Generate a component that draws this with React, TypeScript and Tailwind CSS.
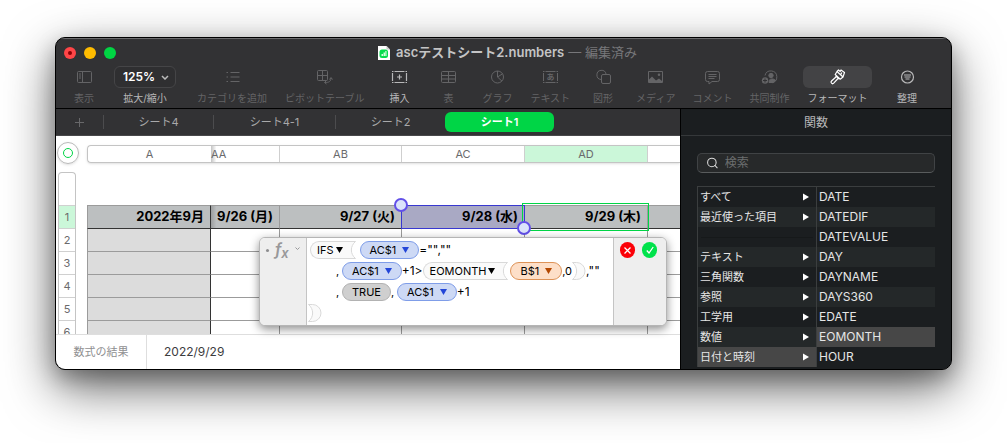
import { ReactNode } from 'react';
import { Search } from 'lucide-react';

const FONT = "font-[Inter,'Noto_Sans_CJK_JP',sans-serif]";

const line = { fill: 'none', stroke: 'currentColor', strokeWidth: 1 };

const icons: Record<string, ReactNode> = {
  view: (
    <g {...line}>
      <rect x="1.5" y="4.5" width="14" height="11" rx="1" />
      <path d="M6.5 4.5v11M3 7h2M3 9h2M3 11h2" />
    </g>
  ),
  category: (
    <path {...line} strokeWidth={1.2} d="M2.5 5.5h1.5M6.5 5.5h9M2.5 10h1.5M6.5 10h9M2.5 14.5h1.5M6.5 14.5h9" />
  ),
  pivot: (
    <g {...line}>
      <rect x="1.5" y="3.5" width="10" height="10" rx="1" />
      <path d="M6.5 3.5v10M1.5 8.5h10M9 15.500c4 0 6-1 6-4.500M13.500 12.500l1.500-2 1.500 2M10.500 13.500l-2 2 2 1.500" />
    </g>
  ),
  insert: (
    <g {...line} strokeWidth={1.2}>
      <path d="M1.5 6v8M15.5 6v8M3.5 4.5h10M3.5 15.5h10M8.5 7.500v5M6 10h5" />
      <path d="M1 4.5h1.5M14.5 4.5H16M1 15.5h1.5M14.5 15.5H16" />
    </g>
  ),
  table: (
    <g {...line}>
      <rect x="1.5" y="4.5" width="14" height="11" rx="1" />
      <path d="M1.5 8.5h14M1.5 12h14M8.5 4.5v11" />
    </g>
  ),
  chart: (
    <g {...line}>
      <circle cx="8.5" cy="10" r="6" />
      <path d="M8.5 4v6l4.500 4.200M8.5 10l5-3.200" />
    </g>
  ),
  text: (
    <g {...line}>
      <path d="M1.5 6v8M15.5 6v8M3.5 4.5h10M3.5 15.5h10" />
      <path d="M1 4.5h1.5M14.5 4.5H16M1 15.5h1.5M14.5 15.5H16" />
      <text x="8.5" y="13" fontSize="8" fontWeight="700" textAnchor="middle" fill="currentColor" stroke="none">あ</text>
    </g>
  ),
  shape: (
    <g {...line}>
      <path d="M6.5 12.5H6A4.600 4.600 0 1 1 11 7" />
      <rect x="6.5" y="7.5" width="9" height="9" rx="1.500" />
    </g>
  ),
  media: (
    <path
      fill="currentColor"
      fillRule="evenodd"
      d="M2 4h13a1 1 0 0 1 1 1v10a1 1 0 0 1-1 1H2a1 1 0 0 1-1-1V5a1 1 0 0 1 1-1Zm0 1v7.500l3-3 4 4 3-2 3 2.500V5H2Zm10 1.500a1.300 1.300 0 1 1 0 2.600 1.300 1.300 0 0 1 0-2.600Z"
    />
  ),
  comment: (
    <path {...line} d="M3.5 4.5h10a2 2 0 0 1 2 2v6a2 2 0 0 1-2 2H8l-3 2.500v-2.500H3.500a2 2 0 0 1-2-2v-6a2 2 0 0 1 2-2ZM4.500 7.500h8M4.500 9.500h8M4.500 11.500h6" />
  ),
  share: (
    <g {...line}>
      <path d="M4 8.500a6 6 0 1 1 7 7.300" />
      <circle cx="10" cy="8.500" r="2.200" fill="currentColor" />
      <path fill="currentColor" d="M8 15.500c0-3 1-3.500 3-3.500s3 .5 3.500 1.500L12 15.500Z" />
      <circle cx="4" cy="13.500" r="3.200" fill="currentColor" stroke="none" />
      <path stroke="#323234" d="M4 11.500v4M2 13.500h4" />
    </g>
  ),
  format: (
    <g {...line} strokeWidth={1.2} strokeLinejoin="round">
      <path d="M8 4.500 14 10l1.500-4.500L12 3l-.8 1.500L9.500 3 8 4.500ZM8 4.500 6.200 7.500l5 4.700L14 10M7.200 9.800 2.500 14a1.500 1.500 0 0 0 2.200 2.200L9 11.500M12.800 5.500l-1 2M6.500 8.500l3.500 3.500" />
    </g>
  ),
  organize: (
    <g {...line} strokeWidth={1.2}>
      <circle cx="8.5" cy="10" r="6" />
      <path d="M5 8h7M5.500 10h6M6.500 12h4" />
    </g>
  ),
};

function ToolButton({ icon, label, active = false }: { icon: string; label: string; active?: boolean }) {
  return (
    <button
      className={`flex min-w-8 flex-col items-center text-[10px] leading-4 whitespace-nowrap ${
        active ? 'text-[#b8b8b9]' : 'text-[#646466]'
      }`}
    >
      <span className={`flex h-[22px] items-center justify-center ${icon === 'format' ? 'w-[69px] rounded-md bg-[#434345] text-white' : ''}`}>
        <svg width="17" height="20" viewBox="0 0 17 20">{icons[icon]}</svg>
      </span>
      <span className="mt-0.5">{label}</span>
    </button>
  );
}

const editTools = [
  ['insert', '挿入'],
  ['table', '表'],
  ['chart', 'グラフ'],
  ['text', 'テキスト'],
  ['shape', '図形'],
  ['media', 'メディア'],
  ['comment', 'コメント'],
  ['share', '共同制作'],
];

function TitleBar() {
  return (
    <div className="relative flex h-[27px] items-center justify-center text-[13px]">
      <div className="absolute left-2 flex gap-2">
        <button aria-label="閉じる" className="flex size-3 items-center justify-center rounded-full bg-[#ff4547]">
          <span className="size-1 rounded-full bg-[#8c0004]" />
        </button>
        <button aria-label="しまう" className="size-3 rounded-full bg-[#ffbc00]" />
        <button aria-label="拡大" className="size-3 rounded-full bg-[#00d543]" />
      </div>
      <svg width="12" height="14" viewBox="0 0 12 14" className="mr-1.5 ml-2">
        <path fill="#fff" d="M0 0h8.500L12 3.500V14H0Z" />
        <path fill="#c9c9c9" d="M8.500 0v3.500H12Z" />
        <rect x="1.500" y="3.500" width="8.500" height="8.500" rx="2.500" fill="#06dc4c" />
        <path fill="#d6ffe0" d="M3.500 8h1.500v2H3.500ZM5.500 6.500H7V10H5.500ZM7.300 5h1.200v5H7.300Z" />
      </svg>
      <h1 className="font-semibold text-[#c4c4c5]">ascテストシート2.numbers</h1>
      <span className="ml-1 text-[#77777a]">— 編集済み</span>
    </div>
  );
}

function Toolbar() {
  return (
    <div className="flex items-start border-b border-black pr-7 pb-0.5 pl-3">
      <div className="flex gap-3.5">
        <ToolButton icon="view" label="表示" />
        <label className="flex flex-col items-center text-[10px] leading-4 text-[#b8b8b9]">
          <span className="relative flex h-[22px] w-[62px] items-center">
            <select className="size-full appearance-none rounded-md border border-[#454547] bg-[#2f2f31] pl-2 text-xs font-semibold text-white">
              <option>125%</option>
            </select>
            <svg width="8" height="5" viewBox="0 0 8 5" className="pointer-events-none absolute right-[7px]">
              <path d="m1 1 3 3 3-3" fill="none" stroke="#bbb" strokeWidth="1.500" />
            </svg>
          </span>
          <span className="mt-0.5">拡大/縮小</span>
        </label>
      </div>
      <div className="ml-[21px] flex gap-[18px]">
        <ToolButton icon="category" label="カテゴリを追加" />
        <ToolButton icon="pivot" label="ピボットテーブル" />
      </div>
      <div className="ml-[19px] flex gap-[17px]">
        {editTools.map(([icon, label]) => (
          <ToolButton key={icon} icon={icon} label={label} active={icon === 'insert'} />
        ))}
      </div>
      <div className="ml-auto flex gap-[19px]">
        <ToolButton icon="format" label="フォーマット" active />
        <ToolButton icon="organize" label="整理" active />
      </div>
    </div>
  );
}

function SheetTabs() {
  return (
    <nav className="flex h-[27px] items-center border-b border-[#48484a] bg-[#323234] text-[11px] text-[#a9a9aa]">
      <button aria-label="シートを追加" className="flex w-[47px] justify-center text-[#68686a]">
        <svg width="11" height="11" viewBox="0 0 11 11">
          <path d="M5.500 1v9M1 5.500h9" stroke="currentColor" />
        </svg>
      </button>
      <button className="h-3.5 w-[110px] border-l border-[#4c4c4e] leading-3.5">シート4</button>
      <button className="h-3.5 w-[122px] border-l border-[#4c4c4e] leading-3.5">シート4-1</button>
      <button className="h-3.5 w-[110px] border-l border-[#4c4c4e] leading-3.5">シート2</button>
      <button className="h-5 w-[109px] rounded-md bg-[#00d546] font-semibold text-white">シート1</button>
    </nav>
  );
}

const dates = ['9/26 (月)', '9/27 (火)', '9/28 (水)', '9/29 (木)'];
const columns = ['A', 'AA', 'AB', 'AC', 'AD', ''];
const columnGrid = 'grid-cols-[123px_68px_122px_123px_123px_1fr]';

function RowHeader() {
  return (
    <div className="flex w-[31px] shrink-0 flex-col pl-0.5">
      <button aria-label="表を選択" className="mt-1.5 -ml-px flex size-[22px] shrink-0 items-center justify-center rounded-full border border-[#b9b9b9] shadow-sm">
        <span className="size-2.5 rounded-full border border-[#00d546]" />
      </button>
      <div className="mt-2 w-[18px] rounded-t-[4px] border border-b-0 border-[#c4c4c4] text-center text-[11px] text-[#6a6a6c]">
        <div className="h-8" />
        {[1, 2, 3, 4, 5, 6].map((n) => (
          <div key={n} className={`h-[23px] border-t border-[#d0d0d0] leading-[23px] ${n === 1 ? 'bg-[#cbf7d9]' : ''}`}>
            {n}
          </div>
        ))}
      </div>
    </div>
  );
}

function Grid() {
  return (
    <div className="min-w-0 flex-1">
      <div className={`mt-[9px] grid ${columnGrid} h-[18px] overflow-hidden rounded-l-[4px] border border-r-0 border-[#c4c4c4] text-center text-[11px] leading-4 text-[#6a6a6c] shadow-sm`}>
        {columns.map((c, i) => (
          <div
            key={i}
            className={`${i > 1 ? 'border-l border-[#cfcfcf]' : ''} ${c === 'AA' ? 'bg-linear-to-r from-[#c4c4c4] to-white to-8% text-left' : ''} ${c === 'AD' ? 'bg-[#cbf7d9]' : ''}`}
          >
            {c}
          </div>
        ))}
      </div>
      <div className="relative mt-[42px]">
        <table className="w-full table-fixed border-separate border-spacing-0 text-[13px]">
          <colgroup>
            <col className="w-[124px]" />
            <col className="w-[69px]" />
            <col className="w-[122px]" />
            <col className="w-[123px]" />
            <col className="w-[123px]" />
            <col />
          </colgroup>
          <thead>
            <tr className="h-6 bg-[#bcbfc0] text-right text-black">
              <th className="border border-[#9b9b9b] border-r-[#333] border-b-[#333] pr-1.5 text-right font-bold">2022年9月</th>
              {dates.map((d, i) => (
                <th
                  key={d}
                  className={`border-t border-r border-b border-[#9b9b9b] border-b-[#333] pr-1.5 text-right font-bold whitespace-nowrap ${
                    i === 0 ? 'bg-linear-to-r from-[#9c9e9f] to-[#bcbfc0] to-8%' : ''
                  } ${i === 2 ? 'bg-[#a9a9c4]' : ''}`}
                >
                  {d}
                </th>
              ))}
              <th className="border-t border-b border-[#9b9b9b] border-b-[#333]" />
            </tr>
          </thead>
          <tbody>
            {[2, 3, 4, 5, 6].map((n) => (
              <tr key={n} className="h-[23px]">
                <td className="border-r border-b border-l border-[#9b9b9b] border-r-[#333] bg-[#dcdcdc]" />
                {dates.map((d) => (
                  <td key={d} className="border-r border-b border-[#9b9b9b]" />
                ))}
                <td className="border-b border-[#9b9b9b]" />
              </tr>
            ))}
          </tbody>
        </table>
        <div className="absolute top-0 left-[314px] h-6 w-[124px] border border-[#3838d0]">
          <span className="absolute -top-2 -left-2 size-[14px] rounded-full border-2 border-[#6250e8] bg-[#dbe3fb]" />
        </div>
        <div className="absolute -top-0.5 left-[435px] h-7 w-[127px] border border-[#00d546]" />
        <span className="absolute top-4 left-[430px] size-[14px] rounded-full border-2 border-[#6250e8] bg-[#dbe3fb]" />
      </div>
    </div>
  );
}

const Down = ({ className = 'text-black' }: { className?: string }) => (
  <svg width="7" height="6" viewBox="0 0 7 6" className={className}>
    <path d="M0 0h7L3.500 6Z" fill="currentColor" />
  </svg>
);

function Cell({ name, orange = false }: { name: string; orange?: boolean }) {
  return (
    <button
      className={`flex h-[18px] items-center gap-1.5 rounded-full border px-[9px] ${
        orange ? 'border-[#dd9358] bg-[#fddfc8]' : 'border-[#7f9de8] bg-[#cdd9f5]'
      }`}
    >
      {name}
      <Down className={orange ? 'text-[#b34700]' : 'text-[#2346d8]'} />
    </button>
  );
}

function Func({ name }: { name: string }) {
  return (
    <button className="flex h-[18px] items-center">
      <span className="flex h-[18px] items-center gap-0.5 rounded-l-full border border-r-0 border-[#d9d9d9] bg-[#fafafa] pl-1.5">
        {name}
        <Down />
      </span>
      <svg width="13" height="18" viewBox="0 0 13 18">
        <path d="M0 .5h12.500C7 5 7 13 12.500 17.500H0" fill="#fafafa" stroke="#d9d9d9" />
      </svg>
    </button>
  );
}

const Close = () => (
  <svg width="14" height="18" viewBox="0 0 14 18">
    <path d="M.5.500h4a8.500 8.500 0 0 1 0 17h-4C6 13 6 5 .5.500Z" fill="#fafafa" stroke="#d9d9d9" />
  </svg>
);

function FormulaEditor() {
  return (
    <div className="absolute top-[101px] left-[203px] flex h-[89px] w-[408px] overflow-hidden rounded-md border border-[#b5b5b5] bg-white text-[11px] text-black shadow-[0_3px_10px_rgba(0,0,0,0.45)]">
      <div className="flex w-[47px] shrink-0 items-start gap-1.5 border-r border-[#c4c4c4] bg-[#eeeeee] pt-[3px] pl-1.5 text-[#98989a]">
        <span className="mt-2 size-[3px] rounded-full bg-[#8d8d8f]" />
        <span className="text-base leading-4 font-semibold italic">
          f<sub className="text-[13px]">x</sub>
        </span>
        <svg width="5" height="4" viewBox="0 0 5 4" className="mt-1.5">
          <path d="m.5.500 2 2 2-2" fill="none" stroke="currentColor" />
        </svg>
      </div>
      <div className="flex flex-1 flex-col gap-[3px] pt-[3px] pl-[3px] leading-4">
        <div className="flex items-center">
          <Func name="IFS" />
          <span className="w-1" />
          <Cell name="AC$1" />
          <span className="text-xs">="",""</span>
        </div>
        <div className="flex items-center pl-[26px]">
          <span className="w-1.5">,</span>
          <Cell name="AC$1" />
          <span className="text-xs">+1&gt;</span>
          <Func name="EOMONTH" />
          <span className="w-0.5" />
          <Cell name="B$1" orange />
          <span>,0</span>
          <Close />
          <span className="text-xs">,""</span>
        </div>
        <div className="flex items-center pl-[26px]">
          <span className="w-1.5">,</span>
          <button className="h-[18px] rounded-full border border-[#b2b2b2] bg-[#cfcfcf] px-[9px] leading-4">TRUE</button>
          <span className="w-1.5">,</span>
          <Cell name="AC$1" />
          <span className="text-xs">+1</span>
        </div>
        <div className="-ml-0.5 flex">
          <Close />
        </div>
      </div>
      <div className="flex w-[53px] shrink-0 gap-[7px] border-l border-[#c4c4c4] bg-[#eeeeee] pt-1 pl-1.5">
        <button aria-label="キャンセル" className="flex h-4 w-[15px] items-center justify-center rounded-full bg-[#fb0007]">
          <svg width="7" height="7" viewBox="0 0 7 7">
            <path d="m.5.500 6 6m0-6-6 6" stroke="#fff" strokeWidth="1.300" />
          </svg>
        </button>
        <button aria-label="適用" className="flex h-4 w-[15px] items-center justify-center rounded-full bg-[#00e24b]">
          <svg width="8" height="8" viewBox="0 0 8 8">
            <path d="M.8 4.500 3 7 7.200 1" fill="none" stroke="#fff" strokeWidth="1.300" />
          </svg>
        </button>
      </div>
    </div>
  );
}

const categories = ['すべて', '最近使った項目', '', 'テキスト', '三角関数', '参照', '工学用', '数値', '日付と時刻'];
const functions = ['DATE', 'DATEDIF', 'DATEVALUE', 'DAY', 'DAYNAME', 'DAYS360', 'EDATE', 'EOMONTH', 'HOUR'];

function FunctionBrowser() {
  return (
    <aside className="w-[271px] shrink-0 border-l border-black bg-[#1b1e20] text-[#e6e6e6]">
      <h2 className="h-[27px] border-b border-[#35383a] text-center text-xs leading-[27px] text-[#b9babb]">関数</h2>
      <label className="mx-4 mt-[17px] flex h-5 items-center rounded-[5px] border border-[#404345] border-b-[#595c5d] bg-[#27292a] px-2">
        <Search size={14} strokeWidth={2} className="text-[#dcdcdc]" />
        <input type="search" placeholder="検索" aria-label="関数を検索" className="ml-1.5 w-full bg-transparent text-xs outline-none placeholder:text-[#6c6e6f]" />
      </label>
      <div className="mx-4 mt-[13px] grid grid-cols-2 border-t border-[#3b3e3f] leading-5">
        <ul className="border-l border-[#3b3e3f] text-[11px]">
          {categories.map((c, i) => (
            <li key={i} className={c === '日付と時刻' ? 'bg-[#474747]' : 'even:bg-[#242829]'}>
              {c ? (
                <button className="flex h-5 w-full items-center justify-between pr-[7px] pl-0.5">
                  {c}
                  <svg width="6" height="8" viewBox="0 0 6 8">
                    <path d="M0 .5v7L6 4Z" fill="#fff" />
                  </svg>
                </button>
              ) : (
                <div className="flex h-5 items-center px-[3px]">
                  <hr className="w-full border-[#16191a]" />
                </div>
              )}
            </li>
          ))}
        </ul>
        <ul className="border-l border-[#3b3e3f] text-xs">
          {functions.map((f) => (
            <li key={f} className={f === 'EOMONTH' ? 'bg-[#474747]' : 'even:bg-[#242829]'}>
              <button className="block h-5 w-full pl-0.5 text-left">{f}</button>
            </li>
          ))}
        </ul>
      </div>
    </aside>
  );
}

export default function App() {
  return (
    <div className={`overflow-hidden bg-white px-[55px] pt-[37px] pb-[73px] ${FONT}`}>
      <div className="overflow-hidden rounded-[10px] border border-black bg-[#323234] shadow-[0_18px_50px_rgba(0,0,0,0.6),0_8px_20px_rgba(0,0,0,0.25)]">
        <header className="border-t border-[#6b6b6d]">
          <TitleBar />
          <Toolbar />
        </header>
        <div className="flex">
          <main className="min-w-0 flex-1 bg-white">
            <SheetTabs />
            <div className="relative">
              <div className="flex h-[198px] overflow-hidden">
                <RowHeader />
                <Grid />
              </div>
              <FormulaEditor />
            </div>
            <div className="flex h-[35px] border-t border-[#dedede] text-[11px] leading-[34px]">
              <span className="w-[91px] border-r border-[#dedede] text-center text-[#8f8f91]">数式の結果</span>
              <output className="pl-[17px] text-xs leading-[34px] text-[#3c3c3e]">2022/9/29</output>
            </div>
          </main>
          <FunctionBrowser />
        </div>
      </div>
    </div>
  );
}
